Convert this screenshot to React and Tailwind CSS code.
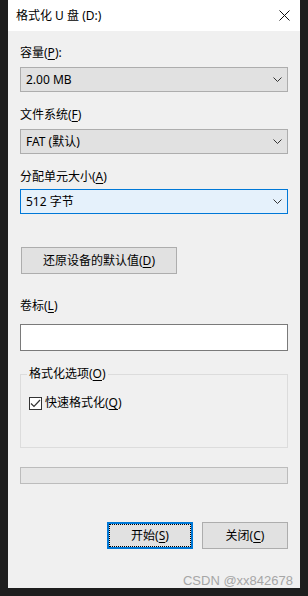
import React from "react";

const FONT = { fontFamily: '"Segoe UI", "Noto Sans", "Noto Sans CJK SC", sans-serif' };

// mnemonic letter, underlined like a Win32 dialog
const K = ({ children }) => <u className="underline underline-offset-[2px]">{children}</u>;

const Chevron = () => (
  <svg width="9" height="5" viewBox="0 0 9 5" className="shrink-0">
    <polyline points="0.5,0.5 4.5,4.5 8.5,0.5" fill="none" stroke="#333" strokeWidth="1" />
  </svg>
);

const Combo = ({ value, active, className }) => (
  <div
    className={`flex h-[25px] items-center justify-between border pl-[5px] pr-[5px] ${
      active ? "border-[#0078d7] bg-[#e5f1fb]" : "border-[#adadad] bg-[#e1e1e1]"
    } ${className}`}
  >
    <span>{value}</span>
    <Chevron />
  </div>
);

export default function App() {
  return (
    <div
      className="relative h-[596px] w-[308px] overflow-hidden bg-[#1e1e1e] pl-[8px] text-[12px] leading-[16px] text-black"
      style={FONT}
    >
      <div className="flex h-[588px] w-[292px] flex-col bg-[#f0f0f0]">
        {/* title bar */}
        <div className="flex h-[31px] shrink-0 items-center justify-between bg-white pl-[8px] pr-[10px]">
          <span>格式化 U 盘 (D:)</span>
          <svg width="11" height="11" viewBox="0 0 11 11">
            <path d="M0.5 0.5 L10.5 10.5 M10.5 0.5 L0.5 10.5" stroke="#111" strokeWidth="1" />
          </svg>
        </div>

        <div className="flex flex-col px-[12px]">
          <div className="mt-[14px]">
            容量(<K>P</K>):
          </div>
          <Combo value="2.00 MB" className="mt-[6px]" />

          <div className="mt-[15px]">
            文件系统(<K>F</K>)
          </div>
          <Combo value="FAT (默认)" className="mt-[6px]" />

          <div className="mt-[15px]">
            分配单元大小(<K>A</K>)
          </div>
          <Combo value="512 字节" active className="mt-[4px]" />

          <button className="mt-[33px] ml-[1px] flex h-[27px] w-[156px] items-center justify-center border border-[#adadad] bg-[#e1e1e1]">
            还原设备的默认值(<K>D</K>)
          </button>

          <div className="mt-[24px]">
            卷标(<K>L</K>)
          </div>
          <div className="mt-[10px] h-[27px] border border-[#7a7a7a] bg-white" />

          <fieldset className="mt-[15px] border border-[#dcdcdc] pl-[8px] pr-[8px] pb-[36px]">
            <legend className="ml-[-2px] px-[2px]">
              格式化选项(<K>O</K>)
            </legend>
            <label className="mt-[13px] flex items-center gap-[3px]">
              <span className="flex h-[13px] w-[13px] items-center justify-center border border-[#333] bg-white">
                <svg width="11" height="9" viewBox="0 0 11 9">
                  <polyline points="1,4.5 4,7.5 10,1" fill="none" stroke="#333" strokeWidth="1.2" />
                </svg>
              </span>
              <span>
                快速格式化(<K>Q</K>)
              </span>
            </label>
          </fieldset>

          <div className="mt-[19px] h-[17px] border border-[#bcbcbc] bg-[#e6e6e6]" />

          <div className="mt-[38px] flex justify-end gap-[9px]">
            <button className="flex h-[27px] w-[86px] border-2 border-[#0078d7] bg-[#e1e1e1] p-0">
              <span className="flex flex-1 items-center justify-center border border-dotted border-black">
                开始(<K>S</K>)
              </span>
            </button>
            <button className="flex h-[27px] w-[86px] items-center justify-center border border-[#adadad] bg-[#e1e1e1]">
              关闭(<K>C</K>)
            </button>
          </div>
        </div>
      </div>

      {/* watermark */}
      <div
        className="absolute bottom-[8px] right-[15px] text-[13px] leading-[14px] text-[#a6a6a6]"
        style={{ fontFamily: '"Liberation Sans", Arial, sans-serif' }}
      >
        CSDN @xx842678
      </div>
    </div>
  );
}
